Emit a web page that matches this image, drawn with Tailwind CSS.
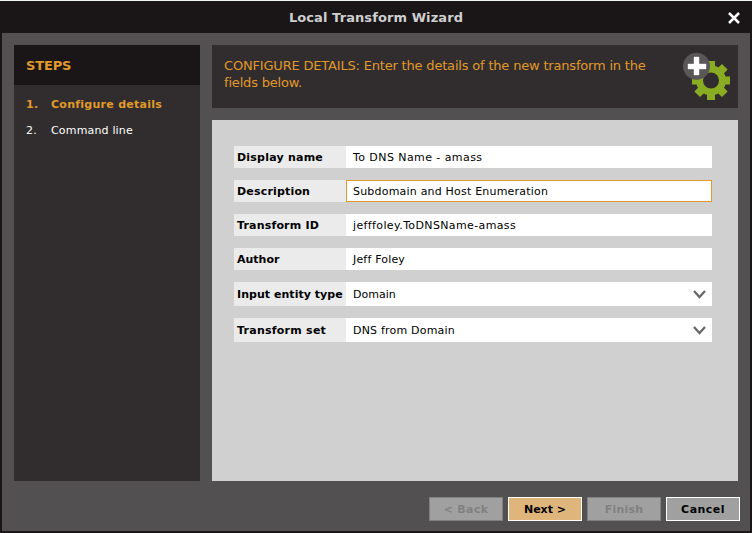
<!DOCTYPE html>
<html lang="en">
<head>
<meta charset="utf-8">
<title>Local Transform Wizard</title>
<script src="https://cdn.jsdelivr.net/npm/@tailwindcss/browser@4"></script>
</head>
<body class="w-[752px] h-[533px] overflow-hidden bg-[#1a1617] font-['DejaVu_Sans',sans-serif] text-[11px] leading-[14px]">
<div class="flex flex-col w-full h-full border-t border-[#f1f5f5]">
  <header class="relative h-8 shrink-0 flex items-center justify-center text-[13px] font-bold text-[#cfcfcf]">
    <h1 class="pt-[2px] whitespace-nowrap tracking-[0.09px]">Local Transform Wizard</h1>
    <button class="absolute left-[728px] top-[11px]" aria-label="Close">
      <svg class="block" width="12" height="12" viewBox="0 0 12 12"><path d="M1 1L11 11M11 1L1 11" stroke="#fff" stroke-width="2.5"/></svg>
    </button>
  </header>
  <main class="mx-[2px] h-[498px] bg-[#525050] px-3 pt-3 flex flex-col">
    <div class="flex gap-3 h-[436px]">
      <aside class="w-[186px] bg-[#312d2e]">
        <h2 class="h-10 bg-[#1a1617] px-3 pt-[2px] flex items-center text-[13px] font-bold tracking-[-0.15px] text-[#e0992b]">STEPS</h2>
        <ol class="px-3 pt-[13px] flex flex-col gap-3 text-white">
          <li class="flex font-bold tracking-[0.27px] text-[#e0992b]"><span class="w-[25px]">1.</span><span>Configure details</span></li>
          <li class="flex tracking-[0.17px]"><span class="w-[25px]">2.</span><span>Command line</span></li>
        </ol>
      </aside>
      <section class="w-[526px] flex flex-col gap-3">
        <div class="h-[63px] bg-[#312d2e] flex justify-between pl-3">
          <p class="pt-[12px] text-[13px] leading-[17px] tracking-[-0.185px] text-[#e0992b] whitespace-nowrap">CONFIGURE DETAILS: Enter the details of the new transform in the<br>fields below.</p>
          <svg class="mt-[7px] mr-[7px] shrink-0" width="48" height="49" viewBox="0 0 48 49">
            <g transform="translate(28 28.5)" fill="#8aac22">
              <path fill-rule="evenodd" d="M-15 0a15 15 0 1 0 30 0a15 15 0 1 0 -30 0M-8 0a8 8 0 1 0 16 0a8 8 0 1 0 -16 0"/>
              <path d="M-4 -19.5H4V-13H-4zM-4 19.5H4V13H-4zM-19 -4V4H-13V-4zM19 -4V4H13V-4z"/>
              <path transform="rotate(45)" d="M-4 -19.5H4V-13H-4zM-4 19.5H4V13H-4zM-19.5 -4V4H-13V-4zM19.5 -4V4H13V-4z"/>
            </g>
            <circle cx="13.5" cy="14.3" r="13.5" fill="#595757"/>
            <path d="M11 5H16V12H23V17H16V23H11V17H5V12H11z" fill="#fff" stroke="#fff" stroke-width="0.4"/>
          </svg>
        </div>
        <form class="h-[361px] bg-[#d0d0d0] pl-[22px] pr-[26px] pt-[26px] flex flex-col gap-3 text-black">
          <div class="flex h-[22px]"><label class="w-28 bg-[#ebebeb] pl-[3px] pt-[2px] flex items-center font-bold tracking-[0.22px] whitespace-nowrap">Display name</label><div class="flex-1 bg-white pl-[7px] pt-px flex items-center tracking-[0.43px]">To DNS Name - amass</div></div>
          <div class="flex h-[22px]"><label class="w-28 bg-[#ebebeb] pl-[3px] pt-[2px] flex items-center font-bold tracking-[0.18px] whitespace-nowrap">Description</label><div class="flex-1 bg-white border border-[#e0992b] pl-[6px] pt-px flex items-center tracking-[0.2px]">Subdomain and Host Enumeration</div></div>
          <div class="flex h-[22px]"><label class="w-28 bg-[#ebebeb] pl-[3px] pt-[2px] flex items-center font-bold tracking-[0.18px] whitespace-nowrap">Transform ID</label><div class="flex-1 bg-white pl-[7px] pt-px flex items-center tracking-[0.37px]">jefffoley.ToDNSName-amass</div></div>
          <div class="flex h-[22px]"><label class="w-28 bg-[#ebebeb] pl-[3px] pt-[2px] flex items-center font-bold whitespace-nowrap">Author</label><div class="flex-1 bg-white pl-[7px] pt-px flex items-center tracking-[0.18px]">Jeff Foley</div></div>
          <div class="flex h-6"><label class="w-28 bg-[#ebebeb] pl-[3px] pt-[2px] flex items-center font-bold tracking-[0.04px] whitespace-nowrap">Input entity type</label><div class="flex-1 bg-white pl-[7px] pr-[6px] flex items-center justify-between"><span class="pt-px">Domain</span><svg width="13" height="9" viewBox="0 0 13 9"><path d="M1 1L6.5 7L12 1" fill="none" stroke="#666" stroke-width="2.2"/></svg></div></div>
          <div class="flex h-6"><label class="w-28 bg-[#ebebeb] pl-[3px] pt-[2px] flex items-center font-bold tracking-[0.25px] whitespace-nowrap">Transform set</label><div class="flex-1 bg-white pl-[7px] pr-[6px] flex items-center justify-between"><span class="pt-px tracking-[0.2px]">DNS from Domain</span><svg width="13" height="9" viewBox="0 0 13 9"><path d="M1 1L6.5 7L12 1" fill="none" stroke="#666" stroke-width="2.2"/></svg></div></div>
        </form>
      </section>
    </div>
    <footer class="mt-4 -mr-[2px] flex justify-end gap-[5px] font-bold text-black">
      <button class="w-[74px] h-6 pt-px border border-[#808080] bg-[#a0a0a0] text-[#808080] tracking-[0.4px]">&lt; Back</button>
      <button class="w-[74px] h-6 pt-px border border-white bg-[#e0b57b]">Next &gt;</button>
      <button class="w-[74px] h-6 pt-px border border-[#808080] bg-[#a0a0a0] text-[#808080] tracking-[0.2px]">Finish</button>
      <button class="w-[74px] h-6 pt-px border border-white bg-[#a0a0a0] tracking-[0.45px]">Cancel</button>
    </footer>
  </main>
</div>
</body>
</html>
